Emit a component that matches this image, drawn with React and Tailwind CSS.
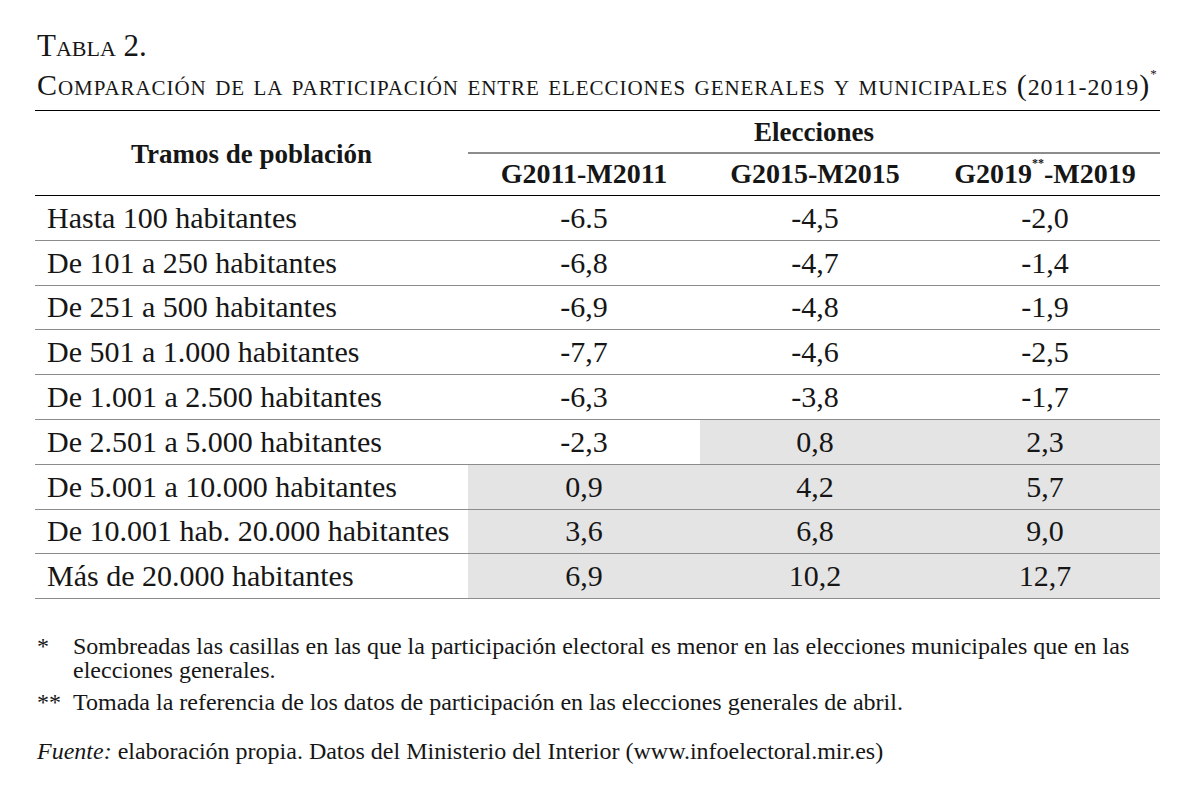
import React from 'react';

const rows = [
  { label: 'Hasta 100 habitantes', v: ['-6.5', '-4,5', '-2,0'], shade: 0 },
  { label: 'De 101 a 250 habitantes', v: ['-6,8', '-4,7', '-1,4'], shade: 0 },
  { label: 'De 251 a 500 habitantes', v: ['-6,9', '-4,8', '-1,9'], shade: 0 },
  { label: 'De 501 a 1.000 habitantes', v: ['-7,7', '-4,6', '-2,5'], shade: 0 },
  { label: 'De 1.001 a 2.500 habitantes', v: ['-6,3', '-3,8', '-1,7'], shade: 0 },
  { label: 'De 2.501 a 5.000 habitantes', v: ['-2,3', '0,8', '2,3'], shade: 2 },
  { label: 'De 5.001 a 10.000 habitantes', v: ['0,9', '4,2', '5,7'], shade: 3 },
  { label: 'De 10.001 hab. 20.000 habitantes', v: ['3,6', '6,8', '9,0'], shade: 3 },
  { label: 'Más de 20.000 habitantes', v: ['6,9', '10,2', '12,7'], shade: 3 },
];

export default function App() {
  return (
    <div className="w-[1196px] h-[796px] bg-white text-[#161616] font-['Liberation_Serif','Times_New_Roman',serif] pl-[35px] pt-[28px]">
      <div className="w-[1125px]">
        <p className="text-[31px] leading-[36px] [font-variant:small-caps] pl-[2px]">Tabla 2.</p>
        <p className="text-[30px] leading-[34px] tracking-[0.95px] [font-variant:small-caps] pl-[2px] mt-[4px] whitespace-nowrap">
          Comparación de la participación entre elecciones generales y municipales (<span className="text-[24px]">2011-2019</span>)
          <sup className="text-[13px] align-super">*</sup>
        </p>
        <table className="w-[1125px] border-collapse mt-[6px] table-fixed">
          <colgroup>
            <col className="w-[433px]" />
            <col className="w-[232px]" />
            <col className="w-[230px]" />
            <col className="w-[230px]" />
          </colgroup>
          <thead>
            <tr className="border-t border-black">
              <th rowSpan={2} className="text-[27px] font-bold text-center align-middle pt-[2px] border-b border-black">
                Tramos de población
              </th>
              <th colSpan={3} className="h-[42px] text-[27px] leading-none font-bold text-center border-b-2 border-[#8c8c8c] pt-[2px]">
                Elecciones
              </th>
            </tr>
            <tr className="border-b border-black">
              <th className="h-[43px] text-[28px] leading-none font-bold text-center">G2011-M2011</th>
              <th className="text-[28px] leading-none font-bold text-center">G2015-M2015</th>
              <th className="text-[28px] leading-none font-bold text-center">
                G2019<sup className="text-[12px] align-super">**</sup>-M2019
              </th>
            </tr>
          </thead>
          <tbody>
            {rows.map((r, i) => (
              <tr key={i} className={i === 5 ? 'border-t border-black border-b border-b-[#8c8c8c]' : 'border-b border-[#8c8c8c]'}>
                <td className="h-[44.8px] text-[30px] leading-none pl-[12px] whitespace-nowrap">{r.label}</td>
                {r.v.map((val, j) => {
                  const shaded = r.shade === 3 || (r.shade === 2 && j >= 1);
                  return (
                    <td key={j} className={`text-[30px] leading-none text-center ${shaded ? 'bg-[#e4e4e4]' : ''}`}>
                      {val}
                    </td>
                  );
                })}
              </tr>
            ))}
          </tbody>
        </table>
        <div className="text-[24px] leading-[24px] mt-[35px] pl-[2px]">
          <div className="flex">
            <span className="w-[36px] shrink-0">*</span>
            <span className="w-[1080px]">
              Sombreadas las casillas en las que la participación electoral es menor en las elecciones municipales que en las elecciones generales.
            </span>
          </div>
          <div className="flex mt-[8px]">
            <span className="w-[36px] shrink-0">**</span>
            <span>Tomada la referencia de los datos de participación en las elecciones generales de abril.</span>
          </div>
          <p className="mt-[25px]">
            <em>Fuente:</em> elaboración propia. Datos del Ministerio del Interior (www.infoelectoral.mir.es)
          </p>
        </div>
      </div>
    </div>
  );
}
